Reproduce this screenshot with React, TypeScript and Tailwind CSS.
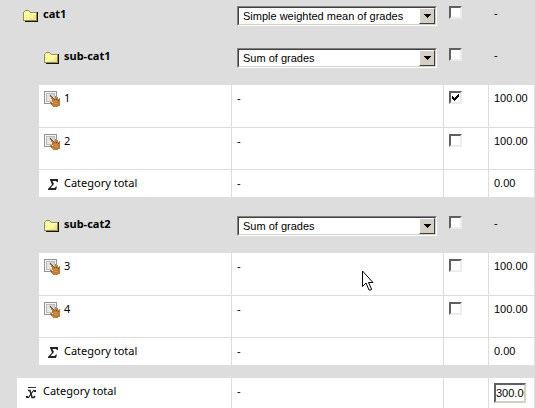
import type { ReactNode } from "react";
import clsx from "clsx";

type Row = {
  kind: "category" | "item" | "total" | "mean";
  level: 1 | 2;
  name: string;
  aggregation?: string;
  checked?: boolean;
  value: string;
  first?: boolean;
};

const sections: Row[][] = [
  [
    { kind: "category", level: 1, name: "cat1", aggregation: "Simple weighted mean of grades", value: "-" },
    { kind: "category", level: 2, name: "sub-cat1", aggregation: "Sum of grades", value: "-" },
    { kind: "item", level: 2, name: "1", checked: true, value: "100.00", first: true },
    { kind: "item", level: 2, name: "2", value: "100.00" },
    { kind: "total", level: 2, name: "Category total", value: "0.00" },
  ],
  [
    { kind: "category", level: 2, name: "sub-cat2", aggregation: "Sum of grades", value: "-" },
    { kind: "item", level: 2, name: "3", value: "100.00", first: true },
    { kind: "item", level: 2, name: "4", value: "100.00" },
    { kind: "total", level: 2, name: "Category total", value: "0.00" },
  ],
  [{ kind: "mean", level: 1, name: "Category total", value: "300.00", first: true }],
];

const FolderIcon = () => (
  <svg className="size-4 shrink-0" viewBox="0 0 16 16" shapeRendering="crispEdges" aria-hidden="true">
    <path d="M2 13h12V4h1v10H2z" fill="#111" />
    <path d="M0 4h1V3h1V2h4v1h1v1h7v9H0z" fill="#94923c" />
    <path d="M1 4h1V3h4v1h1v1h6v7H1z" fill="#fbfb9c" />
    <path d="M1 5h12v1H2v6H1z" fill="#ffffd0" />
    <path d="M11 7h2v5H6v-1h2v-1h2V9h1z" fill="#f7da90" />
    <path d="M8 7h1v1H8zM6 9h1v1H6zM10 8h1v1h-1zM4 10h1v1H4z" fill="#f7e596" />
    <path d="M11 8h1v1h-1zM9 10h1v1H9zM11 10h1v1h-1z" fill="#fbfbac" />
  </svg>
);

const ManualItemIcon = () => (
  <svg className="size-4 shrink-0" viewBox="0 0 16 16" shapeRendering="crispEdges" aria-hidden="true">
    <path d="M0 0h13v13H0z" fill="#90959c" />
    <path d="M1 1h11v11H1z" fill="#f4f4f4" />
    <path d="M2 2h9v9H2z" fill="#b8bbbf" />
    <path d="M3 3h7v7H3z" fill="#e6e6e6" />
    <path d="M5 3h5v3H5z" fill="#d2d3d5" />
    <path
      d="M6 4h1v1h1v1h1v1h1v1h1V5h1v2h1V6h1v2h1V7h1v8h-2v1H9v-1H8v-1H7v-1H6v-2h2v1h1v-1H8V9H8V8H7V6H6z"
      fill="#bb7d3a"
    />
    <path d="M6 4h1v1h1v1h1v1h1v1H9V7H8V6H7V5H6zM7 12h1v1H7zM10 8h1v1h-1zM12 8h1v1h-1zM14 9h1v1h-1z" fill="#744c26" />
    <path d="M10 10h3v1h-3zM10 12h4v1h-4z" fill="#d09550" />
  </svg>
);

const SumIcon = () => (
  <svg className="size-4 shrink-0" viewBox="0 0 16 16" aria-hidden="true">
    <path d="M6 3h8v3h-1l-1-1H8.500l1.500 3-3.500 4h4l1.500-1.500h1L12 14H4v-1l4-4.500L6 4z" fill="#222" />
  </svg>
);

const MeanIcon = () => (
  <svg className="size-4 shrink-0" viewBox="0 0 16 16" aria-hidden="true">
    <path d="M5 3.500h8" stroke="#333" fill="none" />
    <path d="M5 6.500h2l2 7h2l1-1.500" stroke="#222" strokeWidth="1.500" fill="none" />
    <path d="M12.500 6.500h-2l-5 7H3.500" stroke="#222" strokeWidth="1.200" fill="none" />
    <path d="M3 12h2v2H3zM11 6h2v2h-2z" fill="#222" />
  </svg>
);

const icons: Record<Row["kind"], ReactNode> = {
  category: <FolderIcon />,
  item: <ManualItemIcon />,
  total: <SumIcon />,
  mean: <MeanIcon />,
};

const AggregationSelect = ({ label, value }: { label: string; value: string }) => (
  <div className="relative h-5 w-[200px] border border-t-[#808080] border-l-[#808080] border-r-white border-b-white">
    <select
      aria-label={`Aggregation of ${label}`}
      defaultValue={value}
      className="block size-full appearance-none border border-t-[#404040] border-l-[#404040] border-r-[#d4d0c8] border-b-[#d4d0c8] bg-white pl-1 font-['Liberation_Sans',sans-serif] text-[11px] leading-4"
    >
      <option>Simple weighted mean of grades</option>
      <option>Sum of grades</option>
    </select>
    <span className="pointer-events-none absolute top-px right-px flex h-4 w-4 items-center justify-center border border-t-white border-l-white border-r-[#404040] border-b-[#404040] bg-[#d4d0c8]">
      <svg className="h-1 w-[7px]" viewBox="0 0 7 4" shapeRendering="crispEdges" aria-hidden="true">
        <path d="M0 0h7v1H6v1H5v1H4v1H3V3H2V2H1V1H0z" />
      </svg>
    </span>
  </div>
);

const Checkbox = ({ label, checked }: { label: string; checked?: boolean }) => (
  <span className="relative block size-[13px]">
    <input
      type="checkbox"
      aria-label={`Select ${label}`}
      defaultChecked={checked}
      className="peer block size-full appearance-none border-2 border-t-[#606060] border-l-[#606060] border-r-[#eeece8] border-b-[#eeece8] bg-white"
    />
    <svg
      className="pointer-events-none absolute inset-0 hidden size-full peer-checked:block"
      viewBox="0 0 13 13"
      shapeRendering="crispEdges"
      aria-hidden="true"
    >
      <path d="M3 5h1v1h1v1h1V6h1V5h1V4h1V3h1v3H9v1H8v1H7v1H6v1H5V9H4V8H3z" />
    </svg>
  </span>
);

const GradeRow = ({ row }: { row: Row }) => {
  const category = row.kind === "category";
  const cell = clsx(
    "border-l p-0 pl-[5px] align-top font-['Liberation_Sans',sans-serif]",
    category ? "border-transparent" : "border-[#ddd] bg-white",
    !category && !row.first && "border-t",
  );

  return (
    <tr className={clsx(row.kind === "total" ? "h-7" : category && row.level === 2 ? "h-[43px]" : "h-[42px]")}>
      <td className="p-0" colSpan={row.level} />
      <th
        scope="row"
        colSpan={row.level === 1 ? 2 : 1}
        className={clsx(
          "p-0 text-left align-top",
          row.level === 1 ? "pl-[6px]" : "pl-[5px]",
          category ? "font-bold" : "bg-white font-normal",
          !category && !row.first && "border-t border-[#ddd]",
        )}
      >
        <div className="flex gap-1">
          <span className={clsx(category ? "pt-2" : "pt-[6px]")}>{icons[row.kind]}</span>
          <span className={clsx(category ? "pt-[6px]" : "pt-[5px]")}>{row.name}</span>
        </div>
      </th>
      <td className={clsx(cell, row.aggregation ? "pt-[6px]" : "pt-[5px]")}>
        {row.aggregation ? <AggregationSelect label={row.name} value={row.aggregation} /> : "-"}
      </td>
      <td className={clsx(cell, "pt-[6px]")}>
        {(category || row.kind === "item") && <Checkbox label={row.name} checked={row.checked} />}
      </td>
      <td className={clsx(cell, "border-r pt-[5px]")}>
        {row.kind === "mean" ? (
          <input
            type="text"
            aria-label="Category total"
            defaultValue={row.value}
            className="block h-5 w-8 border-2 border-t-[#606060] border-l-[#606060] border-r-[#d4d0c8] border-b-[#d4d0c8] bg-white text-[11px]"
          />
        ) : (
          row.value
        )}
      </td>
    </tr>
  );
};

const MousePointer = () => (
  <svg
    className="pointer-events-none absolute top-[270px] left-[362px] h-[21px] w-3"
    viewBox="0 0 12 21"
    aria-hidden="true"
  >
    <path d="M.5 1v15.500l3.500-3.500 3 7h2l.5-1-3-6.500H11z" fill="white" stroke="black" />
  </svg>
);

export default function App() {
  return (
    <div className="relative min-h-screen overflow-hidden bg-[#ddd] font-['Noto_Sans',sans-serif] text-[11px] leading-4 text-black">
      <table className="w-full table-fixed border-separate border-spacing-0">
        <colgroup>
          <col className="w-[17px]" />
          <col className="w-[22px]" />
          <col className="w-[192px]" />
          <col />
          <col className="w-[45px]" />
          <col className="w-[47px]" />
        </colgroup>
        {sections.map((rows, index) => (
          <tbody key={index}>
            {index > 0 && (
              <tr className="h-[13px]">
                <td className="p-0" colSpan={6} />
              </tr>
            )}
            {rows.map((row) => (
              <GradeRow key={row.name} row={row} />
            ))}
          </tbody>
        ))}
      </table>
      <MousePointer />
    </div>
  );
}
